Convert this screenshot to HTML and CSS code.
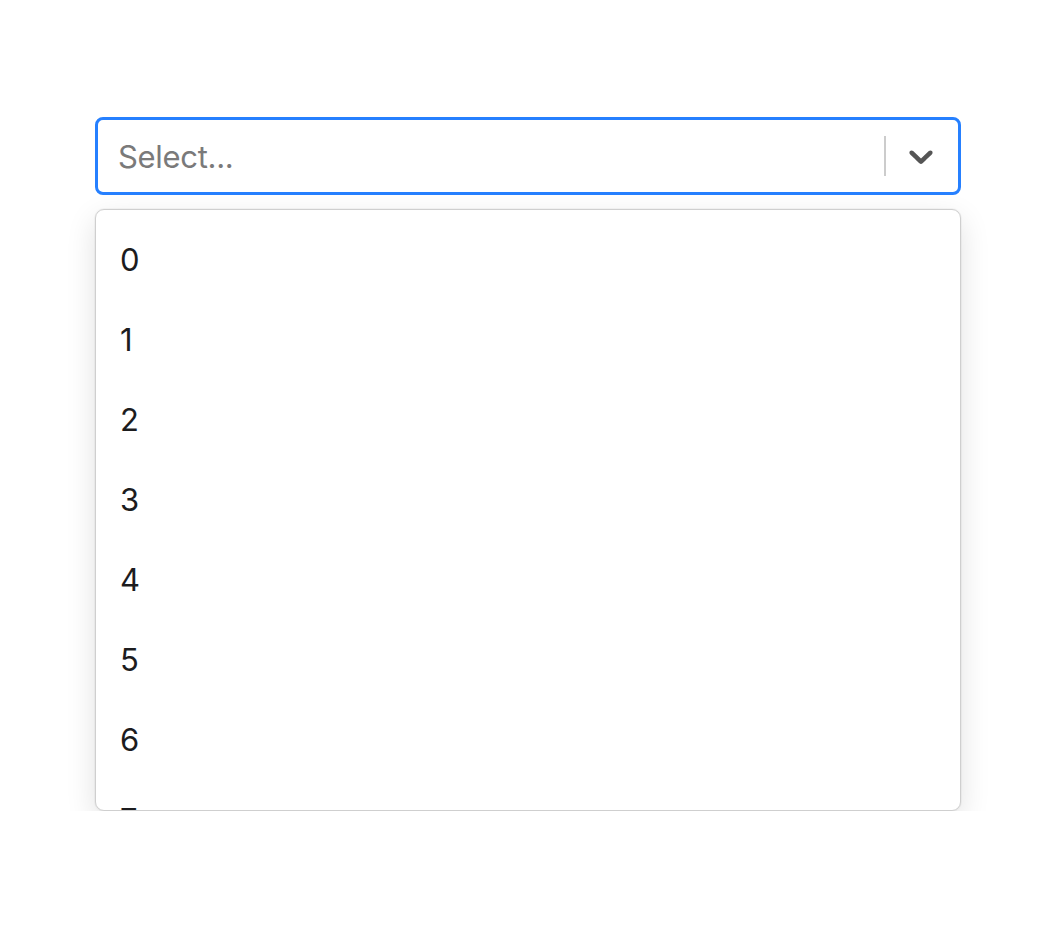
FILE: index.html
```html
<!DOCTYPE html>
<html lang="en">
  <head>
    <meta charset="UTF-8" />
    <meta name="viewport" content="width=device-width, initial-scale=1.0" />
    <title>Select</title>
    <link rel="stylesheet" href="styles.css">
  </head>
  <body>
    <div class="select">
      <div class="select-control">
        <div class="select-value">Select...</div>
        <div class="select-indicators">
          <span class="select-separator"></span>
          <span class="select-arrow">
            <svg viewBox="0 0 20 20" width="40" height="40" aria-hidden="true">
              <path d="M4.516 7.548c0.436-0.446 1.043-0.481 1.576 0l3.908 3.747 3.908-3.747c0.533-0.481 1.141-0.446 1.574 0 0.436 0.445 0.408 1.197 0 1.615-0.406 0.418-4.695 4.502-4.695 4.502-0.217 0.223-0.502 0.335-0.787 0.335s-0.57-0.112-0.789-0.335c0 0-4.287-4.084-4.695-4.502s-0.436-1.17 0-1.615z"></path>
            </svg>
          </span>
        </div>
      </div>

      <!-- la lista se corta en el 7, igual que el menu con scroll -->
      <div class="select-menu">
        <ul class="select-list">
          <li class="select-option">0</li>
          <li class="select-option">1</li>
          <li class="select-option">2</li>
          <li class="select-option">3</li>
          <li class="select-option">4</li>
          <li class="select-option">5</li>
          <li class="select-option">6</li>
          <li class="select-option">7</li>
        </ul>
      </div>
    </div>
  </body>
</html>
```

FILE: styles.css
```css
html {
  box-sizing: border-box;
  font-family: "Inter", "Noto Sans", sans-serif;
  font-size: 31px;
}

*,
*:before,
*:after {
  box-sizing: inherit;
}

body {
  margin: 0;
  padding: 0;
  background: #fff;
  color: #1c1c1e;
}

/* ***** control ***** */
.select {
  width: 866px;
  margin: 117px 0 0 95px;
}

.select-control {
  display: flex;
  align-items: center;
  height: 78px;
  border: 3px solid #2680ff;
  border-radius: 8px;
  background: #fff;
}

.select-value {
  flex: 1;
  padding-left: 20px;
  color: #7a7a7a;
  letter-spacing: -0.3px;
}

.select-indicators {
  display: flex;
  align-items: center;
  align-self: stretch;
}

.select-separator {
  width: 2px;
  height: 40px;
  background: #ccc;
}

.select-arrow {
  display: flex;
  padding: 0 17px 0 15px;
}

.select-arrow svg {
  fill: #555;
}

/* ***** menu ***** */
.select-menu {
  margin-top: 14px;
  border: 1px solid #cfcfcf;
  border-radius: 9px;
  background: #fff;
  box-shadow: 0 0 0 1px rgba(0, 0, 0, 0.03), 0 10px 30px rgba(0, 0, 0, 0.12);
  overflow: hidden;
}

.select-list {
  list-style: none;
  margin: 0;
  padding: 9px 0 0;
  height: 600px;
  overflow: hidden;
}

.select-option {
  display: flex;
  align-items: center;
  height: 80px;
  padding: 0 24px;
}
```
